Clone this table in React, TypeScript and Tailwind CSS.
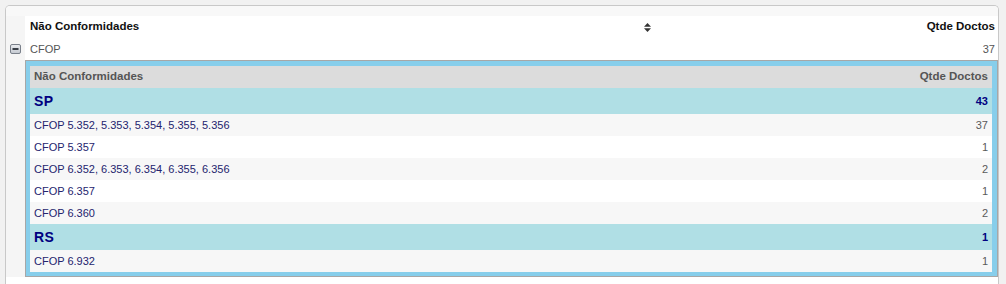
import React from 'react';

type Row = { label: string; qtd: number };
type Group = { uf: string; total: number; rows: Row[] };

const GROUPS: Group[] = [
  {
    uf: 'SP',
    total: 43,
    rows: [
      { label: 'CFOP 5.352, 5.353, 5.354, 5.355, 5.356', qtd: 37 },
      { label: 'CFOP 5.357', qtd: 1 },
      { label: 'CFOP 6.352, 6.353, 6.354, 6.355, 6.356', qtd: 2 },
      { label: 'CFOP 6.357', qtd: 1 },
      { label: 'CFOP 6.360', qtd: 2 },
    ],
  },
  {
    uf: 'RS',
    total: 1,
    rows: [{ label: 'CFOP 6.932', qtd: 1 }],
  },
];

function SortIcon() {
  return (
    <svg width="7" height="9" viewBox="0 0 7 9" className="block">
      <path d="M3.5 0 L7 3.8 L0 3.8 Z" fill="#333" />
      <path d="M0 5.2 L7 5.2 L3.5 9 Z" fill="#333" />
    </svg>
  );
}

function MinusIcon() {
  return (
    <svg width="11" height="10" viewBox="0 0 11 10" className="block">
      <defs>
        <linearGradient id="mg" x1="0" y1="0" x2="0" y2="1">
          <stop offset="0" stopColor="#eceef1" />
          <stop offset="1" stopColor="#c3c8d0" />
        </linearGradient>
      </defs>
      <rect x="0.5" y="0.5" width="10" height="9" rx="1.5" fill="url(#mg)" stroke="#7a808a" />
      <rect x="2.5" y="4" width="6" height="2" fill="#3a3f47" />
    </svg>
  );
}

export default function App() {
  return (
    <div
      className="h-[284px] overflow-hidden bg-[#f1f1f1] pt-[5px] pl-[5px] pr-[7px]"
      style={{ fontFamily: '"Liberation Sans", Arial, sans-serif' }}
    >
      <div className="h-[279px] overflow-hidden rounded-t-[5px] border border-b-0 border-[#c8c8c8] bg-white">
        <div className="h-[10px] bg-[#f8f8f8]" />
        <div className="flex">
          <div className="w-[19px] shrink-0 self-stretch bg-[#f5f5f5]">
            <div className="h-[22px]" />
            <div className="flex h-[22px] items-center pl-[4px]">
              <MinusIcon />
            </div>
          </div>
          <div className="flex-1">
            {/* cabeçalho principal */}
            <div className="flex h-[22px] items-center text-[11.5px] font-bold text-[#111]">
              <div className="flex w-[630px] items-center justify-between pl-[5px] pr-[4px]">
                <span>Não Conformidades</span>
                <SortIcon />
              </div>
              <div className="flex-1 pr-[3px] text-right">Qtde Doctos</div>
            </div>
            <div className="flex h-[22px] items-center justify-between pl-[5px] pr-[3px] text-[11px] text-[#555]">
              <span>CFOP</span>
              <span>37</span>
            </div>

            {/* detalhe */}
            <div className="border border-[#a7a7a7] bg-[#87ceeb] pt-[5px] pr-[5px] pb-[4px] pl-[4px]">
              <div className="flex h-[22px] items-center justify-between bg-[#dcdcdc] px-[4px] text-[11.5px] font-bold text-[#555]">
                <span>Não Conformidades</span>
                <span>Qtde Doctos</span>
              </div>
              {GROUPS.map((g) => (
                <div key={g.uf}>
                  <div className="flex h-[26px] items-center justify-between bg-[#b0dfe5] px-[4px] font-bold text-[#000080]">
                    <span className="text-[14px] tracking-[0.5px]">{g.uf}</span>
                    <span className="text-[11px]">{g.total}</span>
                  </div>
                  {g.rows.map((r, i) => (
                    <div
                      key={r.label}
                      className={`flex h-[22px] items-center justify-between px-[4px] text-[11px] ${
                        i % 2 === 0 ? 'bg-[#f7f7f7]' : 'bg-white'
                      }`}
                    >
                      <span className="text-[#24246e]">{r.label}</span>
                      <span className="text-[#5a5a5a]">{r.qtd}</span>
                    </div>
                  ))}
                </div>
              ))}
            </div>
          </div>
        </div>
      </div>
    </div>
  );
}
